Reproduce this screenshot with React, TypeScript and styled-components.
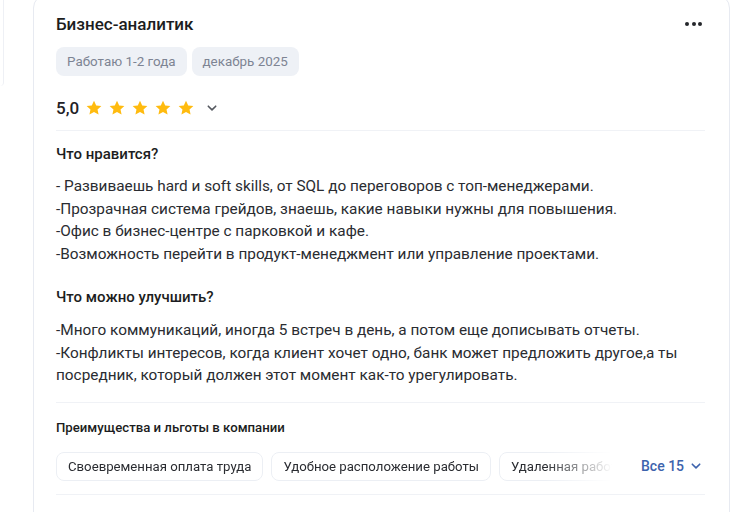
import React from "react";
import styled, { createGlobalStyle } from "styled-components";

const Global = createGlobalStyle`
  html, body { margin: 0; padding: 0; background: #fff; }
  body { font-family: Roboto, "Noto Sans", Arial, sans-serif; color: #1f2126; }
`;

const Page = styled.div`
  display: flex;
  height: 512px;
  overflow: hidden;
  background: #fff;
`;

const SideStub = styled.div`
  width: 3px;
  margin-top: -4px;
  flex: none;
  border-right: 1px solid #eef0f5;
  border-radius: 0 12px 12px 0;
  height: 90px;
`;

const Card = styled.div`
  margin-left: 29px;
  margin-top: -6px;
  width: 697px;
  height: 560px;
  box-sizing: border-box;
  border: 1px solid #e7eaf1;
  border-radius: 14px;
  padding: 16px 24px 0 22px;
  display: flex;
  flex-direction: column;
`;

const Header = styled.div`
  display: flex;
  align-items: center;
  justify-content: space-between;
  height: 26px;
`;

const Title = styled.div`
  font-size: 17px;
  font-weight: 500;
  color: #1c1d21;
`;

const Dots = styled.div`
  display: flex;
  gap: 2.5px;
  margin-right: 3px;
  span {
    width: 4px;
    height: 4px;
    border-radius: 50%;
    background: #24262b;
  }
`;

const Tags = styled.div`
  display: flex;
  gap: 5px;
  margin-top: 10px;
`;

const Tag = styled.div`
  height: 29px;
  display: flex;
  align-items: center;
  padding: 0 11px;
  background: #eef1f6;
  border-radius: 8px;
  font-size: 13.4px;
  color: #7d8493;
`;

const RatingRow = styled.div`
  display: flex;
  align-items: center;
  margin-top: 19px;
  height: 26px;
`;

const Score = styled.div`
  font-size: 17px;
  font-weight: 500;
  margin-right: 6px;
`;

const Stars = styled.div`
  display: flex;
  gap: 5px;
  margin-right: 11px;
`;

const Divider = styled.div<{ $top: number }>`
  height: 1px;
  background: #f0f2f6;
  margin: ${(p) => p.$top}px 0 0;
  width: 649px;
`;

const SectionTitle = styled.div<{ $top: number }>`
  font-size: 15px;
  font-weight: 500;
  margin-top: ${(p) => p.$top}px;
  line-height: 20px;
  color: #1c1d21;
`;

const Text = styled.div<{ $top: number }>`
  font-size: 15.35px;
  line-height: 22.7px;
  color: #2a2c31;
  margin-top: ${(p) => p.$top}px;
  width: 655px;
`;

const PerksTitle = styled.div`
  font-size: 13.2px;
  font-weight: 500;
  margin-top: 16px;
  line-height: 18px;
  color: #1c1d21;
`;

const PerksRow = styled.div`
  display: flex;
  align-items: center;
  margin-top: 15px;
  width: 650px;
`;

const ChipsViewport = styled.div`
  flex: none;
  width: 556px;
  overflow: hidden;
  display: flex;
  gap: 8px;
  -webkit-mask-image: linear-gradient(to right, #000 88%, transparent 100%);
  mask-image: linear-gradient(to right, #000 88%, transparent 100%);
`;

const Chip = styled.div`
  flex: none;
  height: 29px;
  box-sizing: border-box;
  display: flex;
  align-items: center;
  padding: 0 11px;
  border: 1px solid #eceff4;
  border-radius: 8px;
  font-size: 13.2px;
  color: #2a2c31;
`;

const MoreButton = styled.div`
  display: flex;
  align-items: center;
  gap: 6px;
  margin-left: 29px;
  font-size: 14px;
  font-weight: 500;
  color: #3d63ad;
`;

const Star = () => (
  <svg width="18" height="18" viewBox="0 0 24 24">
    <path
      d="M12 2.2l2.95 6.3 6.85.8-5.1 4.7 1.4 6.8L12 17.4l-6.1 3.4 1.4-6.8-5.1-4.7 6.85-.8z"
      fill="#ffbb0f"
    />
  </svg>
);

const Chevron = ({ color, size = 12 }: { color: string; size?: number }) => (
  <svg width={size} height={size} viewBox="0 0 12 12">
    <path d="M2.3 4.2L6 7.9l3.7-3.7" fill="none" stroke={color} strokeWidth="1.6" strokeLinecap="round" strokeLinejoin="round" />
  </svg>
);

export default function App() {
  return (
    <>
      <Global />
      <Page>
        <SideStub />
        <Card>
          <Header>
            <Title>Бизнес-аналитик</Title>
            <Dots>
              <span />
              <span />
              <span />
            </Dots>
          </Header>
          <Tags>
            <Tag>Работаю 1-2 года</Tag>
            <Tag>декабрь 2025</Tag>
          </Tags>
          <RatingRow>
            <Score>5,0</Score>
            <Stars>
              {[0, 1, 2, 3, 4].map((i) => (
                <Star key={i} />
              ))}
            </Stars>
            <Chevron color="#55585f" />
          </RatingRow>
          <Divider $top={9} />
          <SectionTitle $top={13}>Что нравится?</SectionTitle>
          <Text $top={11}>
            - Развиваешь hard и soft skills, от SQL до переговоров с топ-менеджерами.
            <br />
            -Прозрачная система грейдов, знаешь, какие навыки нужны для повышения.
            <br />
            -Офис в бизнес-центре с парковкой и кафе.
            <br />
            -Возможность перейти в продукт-менеджмент или управление проектами.
          </Text>
          <SectionTitle $top={21}>Что можно улучшить?</SectionTitle>
          <Text $top={12}>
            -Много коммуникаций, иногда 5 встреч в день, а потом еще дописывать отчеты.
            <br />
            -Конфликты интересов, когда клиент хочет одно, банк может предложить другое,а ты посредник, который должен этот момент как-то урегулировать.
          </Text>
          <Divider $top={15} />
          <PerksTitle>Преимущества и льготы в компании</PerksTitle>
          <PerksRow>
            <ChipsViewport>
              <Chip>Своевременная оплата труда</Chip>
              <Chip>Удобное расположение работы</Chip>
              <Chip>Удаленная работа</Chip>
            </ChipsViewport>
            <MoreButton>
              Все 15
              <Chevron color="#3d63ad" />
            </MoreButton>
          </PerksRow>
          <Divider $top={13} />
        </Card>
      </Page>
    </>
  );
}
